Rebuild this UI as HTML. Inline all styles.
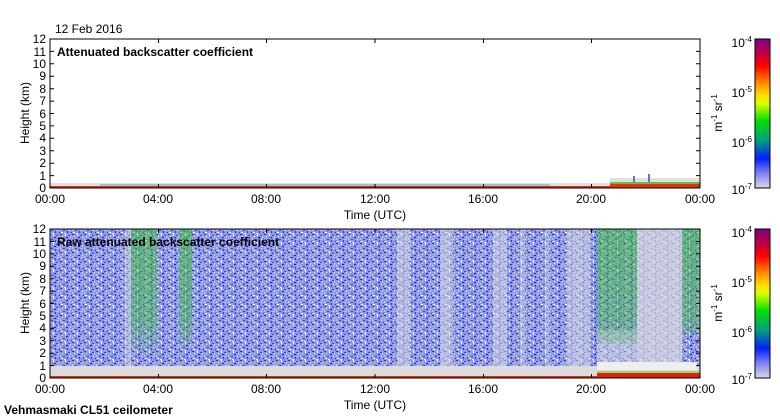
<!DOCTYPE html>
<html><head><meta charset="utf-8"><style>
html,body{margin:0;padding:0;background:#fff;}
svg{display:block;font-family:"Liberation Sans",sans-serif;}
</style></head><body>
<svg width="780" height="420" viewBox="0 0 780 420" xmlns="http://www.w3.org/2000/svg">
<defs>
<pattern id="nz" width="12" height="9" patternUnits="userSpaceOnUse">
<rect width="12" height="9" fill="#8f98e6"/>
<rect x="0" y="0" width="2" height="1" fill="#2030e0"/><rect x="5" y="0" width="1" height="2" fill="#ffffff"/><rect x="8" y="1" width="2" height="1" fill="#3848f0"/>
<rect x="2" y="2" width="1" height="1" fill="#ffffff"/><rect x="10" y="2" width="1" height="2" fill="#d8d8f0"/><rect x="6" y="3" width="2" height="1" fill="#1028d0"/>
<rect x="0" y="4" width="1" height="2" fill="#c8ccf4"/><rect x="3" y="5" width="2" height="1" fill="#3040e8"/><rect x="9" y="5" width="1" height="1" fill="#ffffff"/>
<rect x="1" y="7" width="2" height="1" fill="#ffffff"/><rect x="7" y="6" width="1" height="2" fill="#2838e0"/><rect x="11" y="7" width="1" height="1" fill="#1830d8"/>
<rect x="4" y="8" width="2" height="1" fill="#e0e0f4"/>
</pattern>
<pattern id="gz" width="8" height="6" patternUnits="userSpaceOnUse">
<rect width="8" height="6" fill="#40c040"/>
<rect x="1" y="0" width="2" height="1" fill="#e0f020"/><rect x="5" y="1" width="1" height="2" fill="#20a060"/><rect x="0" y="3" width="1" height="1" fill="#3050e0"/>
<rect x="3" y="4" width="2" height="1" fill="#90e020"/><rect x="7" y="5" width="1" height="1" fill="#20c020"/>
</pattern>
<linearGradient id="cb" x1="0" y1="0" x2="0" y2="1">
<stop offset="0" stop-color="#800080"/><stop offset="0.1" stop-color="#c00040"/><stop offset="0.18" stop-color="#ff0000"/><stop offset="0.3" stop-color="#ff9000"/><stop offset="0.38" stop-color="#ffe000"/><stop offset="0.43" stop-color="#e0ff00"/><stop offset="0.55" stop-color="#00e000"/><stop offset="0.68" stop-color="#00a080"/><stop offset="0.8" stop-color="#0020ff"/><stop offset="0.9" stop-color="#8080f0"/><stop offset="1" stop-color="#d8d8e8"/>
</linearGradient>
<linearGradient id="gfade" x1="0" y1="0" x2="0" y2="1">
<stop offset="0" stop-color="#fff" stop-opacity="1"/><stop offset="0.7" stop-color="#fff" stop-opacity="0.8"/><stop offset="1" stop-color="#fff" stop-opacity="0"/>
</linearGradient>
<mask id="fm"><rect x="0" y="229" width="780" height="130" fill="url(#gfade)"/></mask>
</defs>

<text x="55" y="33" font-size="12">12 Feb 2016</text>

<!-- top plot -->
<rect x="50" y="183" width="650" height="5" fill="#e0e0e0"/>
<rect x="100" y="184" width="450" height="2" fill="#60a0e0" opacity="0.5"/>
<rect x="50" y="186" width="650" height="2" fill="#e03010"/>
<rect x="610" y="178" width="90" height="10" fill="#e0e0e0"/>
<rect x="610" y="182" width="90" height="2" fill="#60c040"/>
<rect x="610" y="184" width="90" height="4" fill="#e83010"/>
<rect x="633" y="176" width="2" height="6" fill="#6070e0"/>
<rect x="648" y="174" width="2" height="8" fill="#6070e0"/>
<rect x="50" y="39" width="650" height="149" fill="none" stroke="#000" stroke-width="1"/>
<text x="57" y="56" font-size="12" font-weight="bold">Attenuated backscatter coefficient</text>

<!-- bottom plot -->
<rect x="50" y="229" width="650" height="149" fill="url(#nz)"/>
<g fill="#dcdcdc" opacity="0.5">
<rect x="397" y="229" width="13" height="149"/><rect x="440" y="229" width="13" height="149"/>
<rect x="493" y="229" width="14" height="149"/><rect x="567" y="229" width="23" height="149"/>
<rect x="125" y="229" width="6" height="149"/>
<rect x="520" y="229" width="5" height="149"/><rect x="545" y="229" width="4" height="149"/>
</g>
<rect x="637" y="229" width="45" height="149" fill="#dcdcdc" opacity="0.7"/>
<rect x="597" y="330" width="40" height="36" fill="#dcdcdc" opacity="0.5"/>
<g mask="url(#fm)" opacity="0.6">
<rect x="131" y="229" width="26" height="125" fill="url(#gz)"/>
<rect x="179" y="229" width="13" height="115" fill="url(#gz)"/>
<rect x="597" y="229" width="40" height="115" fill="url(#gz)"/>
<rect x="682" y="229" width="18" height="105" fill="url(#gz)"/>
</g>
<rect x="50" y="366" width="650" height="12" fill="#dcdcdc"/>
<rect x="597" y="362" width="100" height="8" fill="#eeeeee"/>
<rect x="50" y="376" width="650" height="2" fill="#e03010"/>
<rect x="597" y="373" width="103" height="5" fill="#e02010"/>
<rect x="597" y="371" width="103" height="2" fill="#80d040" opacity="0.7"/>
<rect x="50" y="229" width="650" height="149" fill="none" stroke="#000" stroke-width="1"/>
<text x="57" y="246" font-size="12" font-weight="bold">Raw attenuated backscatter coefficient</text>

<!-- y axes ticks & labels -->
<g font-size="12" text-anchor="end" id="ya">
<text x="46" y="192">0</text><text x="46" y="180">1</text><text x="46" y="167">2</text><text x="46" y="155">3</text><text x="46" y="142">4</text><text x="46" y="130">5</text><text x="46" y="118">6</text><text x="46" y="105">7</text><text x="46" y="93">8</text><text x="46" y="80">9</text><text x="46" y="68">10</text><text x="46" y="56">11</text><text x="46" y="43">12</text>
</g>
<use href="#ya" y="190"/>
<g stroke="#000" id="tk">
<path d="M50 175.6h4M50 163.2h4M50 150.8h4M50 138.3h4M50 125.9h4M50 113.5h4M50 101.1h4M50 88.7h4M50 76.2h4M50 63.8h4M50 51.4h4"/>
<path d="M700 175.6h-4M700 163.2h-4M700 150.8h-4M700 138.3h-4M700 125.9h-4M700 113.5h-4M700 101.1h-4M700 88.7h-4M700 76.2h-4M700 63.8h-4M700 51.4h-4"/>
<path d="M158.5 188v-4M266.5 188v-4M375 188v-4M483.5 188v-4M591.5 188v-4M158.5 39v4M266.5 39v4M375 39v4M483.5 39v4M591.5 39v4"/>
</g>
<use href="#tk" y="190"/>
<g font-size="12" text-anchor="middle" id="xa">
<text x="50" y="203">00:00</text><text x="158" y="203">04:00</text><text x="266" y="203">08:00</text><text x="375" y="203">12:00</text><text x="483" y="203">16:00</text><text x="591" y="203">20:00</text><text x="700" y="203">00:00</text>
<text x="375" y="219">Time (UTC)</text>
</g>
<use href="#xa" y="190"/>
<text transform="translate(29,113) rotate(-90)" font-size="12" text-anchor="middle">Height (km)</text>
<text transform="translate(29,303) rotate(-90)" font-size="12" text-anchor="middle">Height (km)</text>

<!-- colorbars -->
<g id="cbg">
<rect x="755" y="39" width="15" height="149" fill="url(#cb)" stroke="#000" stroke-width="1"/>
<g font-size="12" text-anchor="end">
<text x="752" y="47">10<tspan font-size="8" dy="-5">-4</tspan></text>
<text x="752" y="97">10<tspan font-size="8" dy="-5">-5</tspan></text>
<text x="752" y="147">10<tspan font-size="8" dy="-5">-6</tspan></text>
<text x="752" y="194">10<tspan font-size="8" dy="-5">-7</tspan></text>
</g>
<text transform="translate(722,113) rotate(-90)" font-size="12" text-anchor="middle">m<tspan font-size="8" dy="-5">-1</tspan><tspan dy="5"> sr</tspan><tspan font-size="8" dy="-5">-1</tspan></text>
</g>
<use href="#cbg" y="190"/>

<text x="4" y="414" font-size="12" font-weight="bold">Vehmasmaki CL51 ceilometer</text>
</svg>
</body></html>
